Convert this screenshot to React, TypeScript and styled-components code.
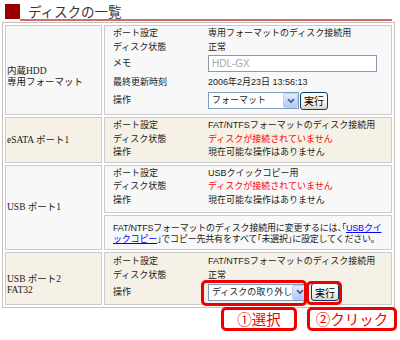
import styled, { createGlobalStyle } from "styled-components";

const GlobalStyle = createGlobalStyle`
  body {
    margin: 0;
    background: #ffffff;
    font-family: "Noto Sans CJK JP", sans-serif;
  }
`;

const tones = {
  plain: "#f8f8f8",
  beige: "#f5f1e6",
};

type Tone = keyof typeof tones;

export default function App() {
  return (
    <>
      <GlobalStyle />
      <Page>
        <Heading>
          <Mark />
          <Title>ディスクの一覧</Title>
        </Heading>

        <DiskTable>
          <tbody>
            <tr>
              <PortCell $tone="plain" $shift={14}>
                内蔵HDD
                <br />
                専用フォーマット
              </PortCell>
              <DetailCell $tone="plain" $pad="0 0 4px 8px">
                <InfoGrid $rows="14px 14px 19px 18px 19px">
                  <Label>ポート設定</Label>
                  <Value>専用フォーマットのディスク接続用</Value>
                  <Label>ディスク状態</Label>
                  <Value>正常</Value>
                  <Label>メモ</Label>
                  <Value>
                    <MemoInput readOnly value="HDL-GX" />
                  </Value>
                  <Label>最終更新時刻</Label>
                  <Value>2006年2月23日 13:56:13</Value>
                  <Label>操作</Label>
                  <Value>
                    <Controls>
                      <SelectBox $w={91}>
                        フォーマット
                        <DropArrow>
                          <Chevron />
                        </DropArrow>
                      </SelectBox>
                      <RunButton>実行</RunButton>
                    </Controls>
                  </Value>
                </InfoGrid>
              </DetailCell>
            </tr>

            <tr>
              <PortCell $tone="beige">eSATA ポート1</PortCell>
              <DetailCell $tone="beige" $pad="1px 0 2.5px 8px">
                <InfoGrid $rows="13.5px 13.5px 13.5px">
                  <Label>ポート設定</Label>
                  <Value>FAT/NTFSフォーマットのディスク接続用</Value>
                  <Label>ディスク状態</Label>
                  <Value $alert>ディスクが接続されていません</Value>
                  <Label>操作</Label>
                  <Value>現在可能な操作はありません</Value>
                </InfoGrid>
              </DetailCell>
            </tr>

            <tr>
              <PortCell $tone="plain" rowSpan={2}>
                USB ポート1
              </PortCell>
              <DetailCell $tone="plain" $pad="0.5px 0 5px 8px">
                <InfoGrid $rows="13.5px 13.5px 13.5px">
                  <Label>ポート設定</Label>
                  <Value>USBクイックコピー用</Value>
                  <Label>ディスク状態</Label>
                  <Value $alert>ディスクが接続されていません</Value>
                  <Label>操作</Label>
                  <Value>現在可能な操作はありません</Value>
                </InfoGrid>
              </DetailCell>
            </tr>
            <tr>
              <DetailCell $tone="plain" $pad="7px 0 4px 8px">
                <Note>
                  FAT/NTFSフォーマットのディスク接続用に変更するには、「
                  <NoteLink href="#">
                    USBクイ
                    <br />
                    ックコピー
                  </NoteLink>
                  」でコピー先共有をすべて「未選択」に設定してください。
                </Note>
              </DetailCell>
            </tr>

            <tr>
              <PortCell $tone="beige" $shift={13}>
                USB ポート2
                <br />
                FAT32
              </PortCell>
              <DetailCell $tone="beige" $pad="2px 0 2px 8px">
                <InfoGrid $rows="13.5px 13.5px 20px">
                  <Label>ポート設定</Label>
                  <Value>FAT/NTFSフォーマットのディスク接続用</Value>
                  <Label>ディスク状態</Label>
                  <Value>正常</Value>
                  <Label>操作</Label>
                  <Value>
                    <Controls $gap={3}>
                      <SelectBox $w={100}>
                        ディスクの取り外し
                        <DropArrow>
                          <Chevron />
                        </DropArrow>
                      </SelectBox>
                      <RunButton>実行</RunButton>
                    </Controls>
                  </Value>
                </InfoGrid>
              </DetailCell>
            </tr>
          </tbody>
        </DiskTable>

        <Frame $x={201} $y={280} $w={106} $h={26} />
        <Frame $x={306} $y={281} $w={36} $h={24} />
        <Callout $x={221} $y={307} $w={76}>①選択</Callout>
        <Callout $x={307} $y={307} $w={90}>②クリック</Callout>
      </Page>
    </>
  );
}

const Chevron = () => (
  <svg width="8" height="6" viewBox="0 0 8 6">
    <path d="M1 1.2l3 3 3-3" stroke="#4d6185" strokeWidth="1.7" fill="none" />
  </svg>
);

const Page = styled.div`
  position: relative;
  width: 400px;
  height: 340px;
  overflow: hidden;
  padding: 4px 0 0 2px;
  box-sizing: border-box;
`;

const Heading = styled.div`
  display: flex;
  margin-left: 3px;
  width: 387px;
`;

const Mark = styled.div`
  width: 15px;
  height: 15px;
  background: #990000;
`;

const Title = styled.h1`
  flex: 1;
  margin: 0;
  height: 15px;
  padding-left: 8px;
  border-bottom: 2px solid #d26b6b;
  font-size: 13.5px;
  font-weight: 400;
  line-height: 14px;
  color: #333333;
`;

const DiskTable = styled.table`
  margin-top: 1px;
  width: 393px;
  table-layout: fixed;
  border-collapse: separate;
  border-spacing: 2px;
  border: 1px solid #c6c2ba;
  font-size: 9px;
  color: #1a1a1a;
`;

const PortCell = styled.td<{ $tone: Tone; $shift?: number }>`
  width: 94px;
  padding: ${(p) => p.$shift ?? 0}px 0 0 1px;
  border: 1px solid #cbcbcb;
  background: ${(p) => tones[p.$tone]};
  vertical-align: middle;
  font-family: "Liberation Serif", "Noto Sans CJK JP", serif;
  font-size: 9.5px;
  line-height: 11px;
  white-space: nowrap;
`;

const DetailCell = styled.td<{ $tone: Tone; $pad: string }>`
  padding: ${(p) => p.$pad};
  border: 1px solid #cbcbcb;
  background: ${(p) => tones[p.$tone]};
  vertical-align: top;
`;

const InfoGrid = styled.div<{ $rows: string }>`
  display: grid;
  grid-template-columns: 95px 1fr;
  grid-template-rows: ${(p) => p.$rows};
  align-items: center;
  font-family: "Liberation Sans", "Noto Sans CJK JP", sans-serif;
  line-height: 13px;
  white-space: nowrap;
`;

const Label = styled.div``;

const Value = styled.div<{ $alert?: boolean }>`
  color: ${(p) => (p.$alert ? "#ff0000" : "inherit")};
  display: flex;
  align-items: center;
`;

const MemoInput = styled.input`
  box-sizing: border-box;
  width: 169px;
  height: 17px;
  margin: 0;
  padding: 0 3px;
  border: 1px solid #7f9db9;
  background: #ffffff;
  color: #a8a8a8;
  font: 10px "Liberation Sans", sans-serif;
  outline: none;
`;

const Controls = styled.div<{ $gap?: number }>`
  display: flex;
  align-items: center;
  gap: ${(p) => p.$gap ?? 1}px;
`;

const SelectBox = styled.div<{ $w: number }>`
  box-sizing: border-box;
  width: ${(p) => p.$w}px;
  height: 17px;
  padding-left: 3px;
  border: 1px solid #7f9db9;
  background: #ffffff;
  display: flex;
  align-items: center;
  justify-content: space-between;
  font-size: 9px;
`;

const DropArrow = styled.span`
  box-sizing: border-box;
  width: 15px;
  height: 15px;
  border: 1px solid #bccdf7;
  border-radius: 2px;
  background: linear-gradient(#e3ebfe, #b3c8f6);
  display: flex;
  align-items: center;
  justify-content: center;
`;

const RunButton = styled.button`
  box-sizing: border-box;
  width: 28px;
  height: 18px;
  padding: 0;
  border: 1px solid #003c74;
  border-radius: 3px;
  background: linear-gradient(#ffffff, #f3f2ec 60%, #d9d4c8);
  color: #000000;
  font: 10px "Noto Sans CJK JP", sans-serif;
`;

const Note = styled.div`
  font-family: "Liberation Sans", "Noto Sans CJK JP", sans-serif;
  line-height: 11px;
  letter-spacing: -0.2px;
  font-feature-settings: "halt";
  white-space: nowrap;
`;

const NoteLink = styled.a`
  color: #0000ff;
  text-decoration: underline;
`;

const Frame = styled.div<{ $x: number; $y: number; $w: number; $h: number }>`
  position: absolute;
  left: ${(p) => p.$x}px;
  top: ${(p) => p.$y}px;
  width: ${(p) => p.$w}px;
  height: ${(p) => p.$h}px;
  box-sizing: border-box;
  border: 3px solid #ee0000;
  border-radius: 5px;
`;

const Callout = styled.div<{ $x: number; $y: number; $w: number }>`
  position: absolute;
  left: ${(p) => p.$x}px;
  top: ${(p) => p.$y}px;
  width: ${(p) => p.$w}px;
  height: 24px;
  box-sizing: border-box;
  border: 3px solid #ee0000;
  border-radius: 5px;
  background: #ffffff;
  color: #ee0000;
  font-size: 14.5px;
  line-height: 18px;
  text-align: center;
`;
